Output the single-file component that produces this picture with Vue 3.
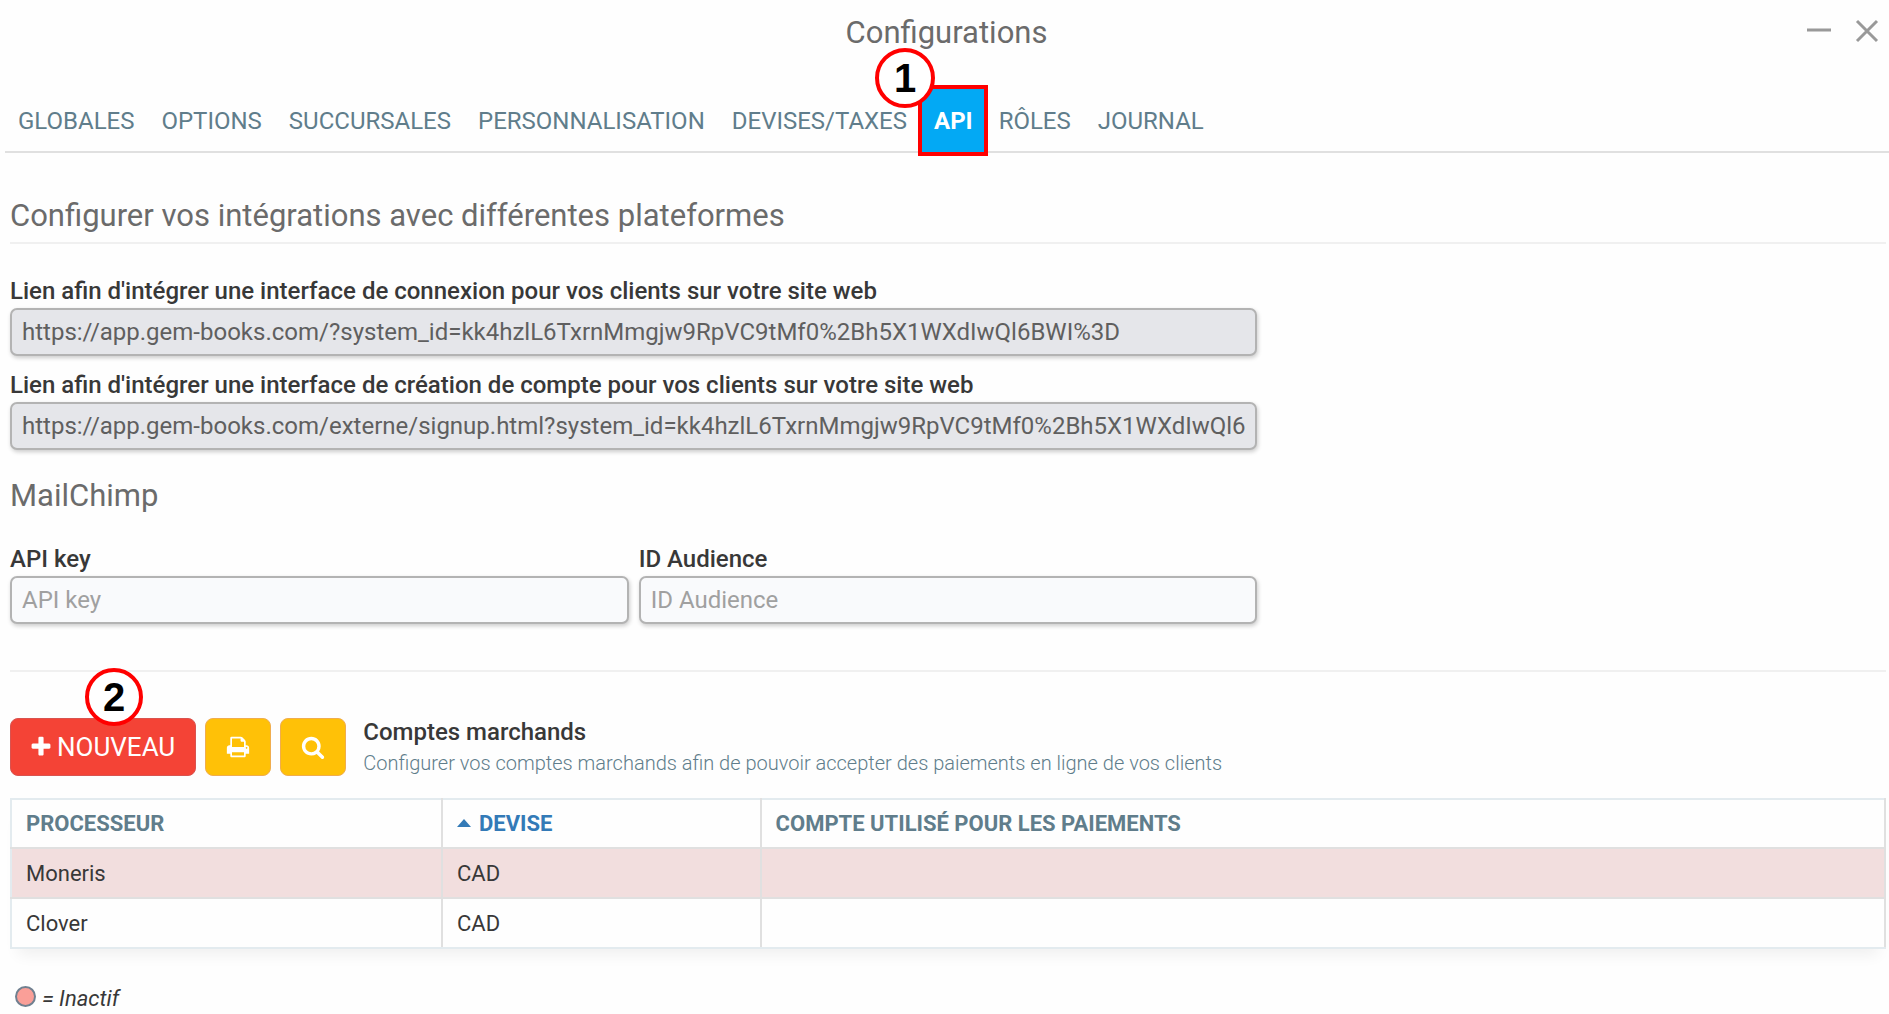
<script setup>
import { ref } from 'vue';

const tabs=['Globales','Options','Succursales','Personnalisation','Devises/Taxes','API','Rôles','Journal'];
const activeTab=ref('API');

const loginLink=ref('https://app.gem-books.com/?system_id=kk4hzlL6TxrnMmgjw9RpVC9tMf0%2Bh5X1WXdIwQl6BWI%3D');
const signupLink=ref('https://app.gem-books.com/externe/signup.html?system_id=kk4hzlL6TxrnMmgjw9RpVC9tMf0%2Bh5X1WXdIwQl6BWI%3D');
const apiKey=ref('');
const audienceId=ref('');

const accounts=[
    {id:1,processor:'Moneris',currency:'CAD',account:'',inactive:true},
    {id:2,processor:'Clover',currency:'CAD',account:'',inactive:false},
];
</script>

<template>
    <div class="window">
        <header class="window-header">
            <h1 class="window-title">Configurations</h1>
            <div class="window-controls">
                <button class="window-btn" type="button" aria-label="Réduire">
                    <svg width="24" height="24" viewBox="0 0 24 24"><path d="M0 11h24" /></svg>
                </button>
                <button class="window-btn" type="button" aria-label="Fermer">
                    <svg width="24" height="24" viewBox="0 0 24 24"><path d="M2 2l20 20M22 2L2 22" /></svg>
                </button>
            </div>
        </header>

        <nav class="tabs">
            <div v-for="tab in tabs" :key="tab" class="tab-item">
                <a
                    href="#"
                    class="tab"
                    :class="{active:tab===activeTab}"
                    @click.prevent="activeTab=tab"
                >{{ tab }}</a>
                <span v-if="tab==='API'" class="step step-tab">1</span>
            </div>
        </nav>

        <main class="content">
            <h2 class="section-title underlined">Configurer vos intégrations avec différentes plateformes</h2>

            <div class="fields">
                <div class="field wide">
                    <label for="login-link">Lien afin d'intégrer une interface de connexion pour vos clients sur votre site web</label>
                    <input id="login-link" v-model="loginLink" type="text" readonly>
                </div>
                <div class="field wide">
                    <label for="signup-link">Lien afin d'intégrer une interface de création de compte pour vos clients sur votre site web</label>
                    <input id="signup-link" v-model="signupLink" type="text" readonly>
                </div>
            </div>

            <h2 class="section-title">MailChimp</h2>

            <div class="fields">
                <div class="field">
                    <label for="api-key">API key</label>
                    <input id="api-key" v-model="apiKey" type="text" placeholder="API key">
                </div>
                <div class="field">
                    <label for="audience-id">ID Audience</label>
                    <input id="audience-id" v-model="audienceId" type="text" placeholder="ID Audience">
                </div>
            </div>

            <hr class="separator">

            <div class="toolbar">
                <div class="new-wrap">
                    <button class="btn btn-new" type="button">
                        <svg class="icon" viewBox="0 0 1792 1792"><path d="M1600 736v192q0 40-28 68t-68 28h-416v416q0 40-28 68t-68 28h-192q-40 0-68-28t-28-68v-416h-416q-40 0-68-28t-28-68v-192q0-40 28-68t68-28h416v-416q0-40 28-68t68-28h192q40 0 68 28t28 68v416h416q40 0 68 28t28 68z" /></svg>
                        <span>NOUVEAU</span>
                    </button>
                    <span class="step step-new">2</span>
                </div>
                <button class="btn btn-tool" type="button" aria-label="Imprimer">
                    <svg class="icon" viewBox="0 0 1792 1792"><path d="M448 1536h896v-256h-896v256zm0-640h896v-384h-160q-40 0-68-28t-28-68v-160h-640v640zm1152 64q0-26-19-45t-45-19-45 19-19 45 19 45 45 19 45-19 19-45zm128 0v416q0 13-9.5 22.5t-22.5 9.5h-224v160q0 40-28 68t-68 28h-960q-40 0-68-28t-28-68v-160h-224q-13 0-22.5-9.5t-9.5-22.5v-416q0-79 56.5-135.5t135.5-56.5h64v-544q0-40 28-68t68-28h672q40 0 88 20t76 48l152 152q28 28 48 76t20 88v256h64q79 0 135.5 56.5t56.5 135.5z" /></svg>
                </button>
                <button class="btn btn-tool" type="button" aria-label="Rechercher">
                    <svg class="icon" viewBox="0 0 1792 1792"><path d="M1216 832q0-185-131.5-316.5t-316.5-131.5-316.5 131.5-131.5 316.5 131.5 316.5 316.5 131.5 316.5-131.5 131.5-316.5zm512 832q0 52-38 90t-90 38q-54 0-90-38l-343-342q-179 124-399 124-143 0-273.5-55.5t-225-150-150-225-55.5-273.5 55.5-273.5 150-225 225-150 273.5-55.5 273.5 55.5 225 150 150 225 55.5 273.5q0 220-124 399l343 343q37 37 37 90z" /></svg>
                </button>
                <div class="toolbar-text">
                    <h3 class="toolbar-title">Comptes marchands</h3>
                    <p class="toolbar-desc">Configurer vos comptes marchands afin de pouvoir accepter des paiements en ligne de vos clients</p>
                </div>
            </div>

            <table class="accounts">
                <colgroup>
                    <col class="col-processor">
                    <col class="col-currency">
                    <col>
                </colgroup>
                <thead>
                    <tr>
                        <th>PROCESSEUR</th>
                        <th class="sorted">
                            <svg class="caret" width="14" height="8" viewBox="0 0 14 8"><path d="M7 0l7 8H0z" /></svg>DEVISE
                        </th>
                        <th>COMPTE UTILISÉ POUR LES PAIEMENTS</th>
                    </tr>
                </thead>
                <tbody>
                    <tr v-for="account in accounts" :key="account.id" :class="{inactive:account.inactive}">
                        <td>{{ account.processor }}</td>
                        <td>{{ account.currency }}</td>
                        <td>{{ account.account }}</td>
                    </tr>
                </tbody>
            </table>

            <p class="legend"><span class="legend-dot"></span>= Inactif</p>
        </main>
    </div>
</template>

<style>
body{
    background-color: #fefefe;
}
</style>

<style scoped>
.window{
    font-family: Roboto, sans-serif;
    font-size: 24px;
    color: #383838;
}
.window-header{
    display: grid;
    grid-template-columns: 1fr auto 1fr;
    height: 64px;
    padding: 0 10px 0 14px;
}
.window-title{
    grid-column: 2;
    margin: 0;
    font-size: 31px;
    line-height: 66px;
    font-weight: 400;
    color: #6b6b6b;
}
.window-controls{
    display: flex;
    justify-content: flex-end;
    gap: 24px;
    padding-top: 19px;
}
.window-btn{
    height: 24px;
    padding: 0;
    border: 0;
    background: none;
}
.window-btn svg{
    display: block;
    fill: none;
    stroke: #999999;
    stroke-width: 3;
}
.tabs{
    display: flex;
    margin: 21px 0 0 5px;
    border-bottom: 2px solid #e0e0e0;
}
.tab-item{
    position: relative;
    margin-bottom: -5px;
}
.tab{
    display: block;
    padding: 5px 14px 3px 13px;
    line-height: 63px;
    text-transform: uppercase;
    text-decoration: none;
    color: #607d8b;
}
.tab.active{
    margin: 0 -2px 0 -3px;
    padding: 1px 11px 0 12px;
    border: 4px solid #ff0000;
    background-color: #03a9f4;
    line-height: 62px;
    color: #ffffff;
    font-weight: 700;
}
.step{
    position: absolute;
    box-sizing: border-box;
    border: 4px solid #ff0000;
    border-radius: 50%;
    background-color: #ffffff;
    color: #000000;
    font-family: "Liberation Sans", Arial, sans-serif;
    font-size: 40px;
    font-weight: 700;
    text-align: center;
}
.step-tab{
    top: -37px;
    left: -46px;
    width: 60px;
    height: 60px;
    line-height: 52px;
}
.step-new{
    top: -50px;
    left: 75px;
    width: 58px;
    height: 58px;
    line-height: 50px;
}
.content{
    padding: 0 3px 0 10px;
}
.section-title{
    margin: 0;
    font-size: 31px;
    line-height: 40px;
    font-weight: 400;
    color: #6b6b6b;
}
.section-title.underlined{
    margin: 43px 0 31px;
    padding-bottom: 6px;
    border-bottom: 2px solid #f0f0f0;
}
.fields{
    display: grid;
    grid-template-columns: repeat(6, 1fr);
    column-gap: 10px;
    row-gap: 13px;
}
.field{
    grid-column: span 2;
}
.field.wide{
    grid-column: 1 / span 4;
}
.field label{
    display: block;
    padding-bottom: 1px;
    line-height: 32px;
    font-weight: 500;
}
.field input{
    box-sizing: border-box;
    display: block;
    width: 100%;
    height: 48px;
    padding: 0 10px;
    border: 2px solid #b3b3b3;
    border-radius: 7px;
    background-color: #f9fafc;
    box-shadow: 1px 2px 4px #00000033;
    font-family: inherit;
    font-size: 24px;
    color: #5f5f5f;
    outline: none;
}
.field input:read-only{
    background-color: #e5e6ea;
}
.field input::placeholder{
    color: #a0a0a0;
    opacity: 1;
}
.fields + .section-title{
    margin: 26px 0 27px;
}
.separator{
    margin: 46px 0 44px;
    border: 0;
    border-top: 2px solid #f0f0f0;
}
.toolbar{
    display: flex;
    align-items: center;
    gap: 9px;
    margin-bottom: 20px;
}
.new-wrap{
    position: relative;
}
.btn{
    display: flex;
    align-items: center;
    justify-content: center;
    box-sizing: border-box;
    height: 58px;
    border-radius: 8px;
    color: #ffffff;
    font-family: inherit;
    font-size: 26px;
}
.btn-new{
    gap: 4px;
    padding: 0 20px 0 18px;
    border: 1px solid #d9534f;
    background-color: #f44336;
}
.btn-tool{
    width: 66px;
    padding: 0;
    border: 1px solid #f0ad4e;
    background-color: #ffc107;
}
.icon{
    width: 24px;
    height: 24px;
    fill: #ffffff;
}
.toolbar-text{
    margin-left: 8px;
}
.toolbar-title{
    margin: 0;
    font-size: 24px;
    line-height: 32px;
    font-weight: 500;
}
.toolbar-desc{
    margin: 0;
    font-size: 20px;
    line-height: 30px;
    font-weight: 300;
    color: #607d8b;
}
.accounts{
    width: 100%;
    table-layout: fixed;
    border-collapse: collapse;
    border: 2px solid #e3ebef;
    box-shadow: 0 14px 14px -8px #0000000f;
    font-size: 22px;
}
.col-processor{
    width: 23%;
}
.col-currency{
    width: 17%;
}
.accounts th,
.accounts td{
    box-sizing: border-box;
    height: 50px;
    padding: 0 14px;
    border: 2px solid #e0e0e0;
    text-align: left;
}
.accounts th{
    height: 49px;
    border-top-color: #e3ebef;
    font-weight: 700;
    color: #607d8b;
}
.accounts th:first-child,
.accounts td:first-child{
    border-left-color: #e3ebef;
}
.accounts tr:last-child td{
    border-bottom-color: #e3ebef;
}
.accounts th.sorted{
    color: #337ab7;
}
.caret{
    margin-right: 8px;
    vertical-align: 4px;
    fill: #337ab7;
}
.accounts tr.inactive{
    background-color: #f2dede;
}
.legend{
    display: flex;
    align-items: flex-start;
    gap: 6px;
    margin: 34px 0 0;
    padding-left: 5px;
    font-size: 22px;
    line-height: 32px;
    font-style: italic;
}
.legend-dot{
    box-sizing: border-box;
    width: 21px;
    height: 21px;
    margin-top: 3px;
    border: 2px solid #708090;
    border-radius: 50%;
    background-color: #fa9f98;
}
</style>
